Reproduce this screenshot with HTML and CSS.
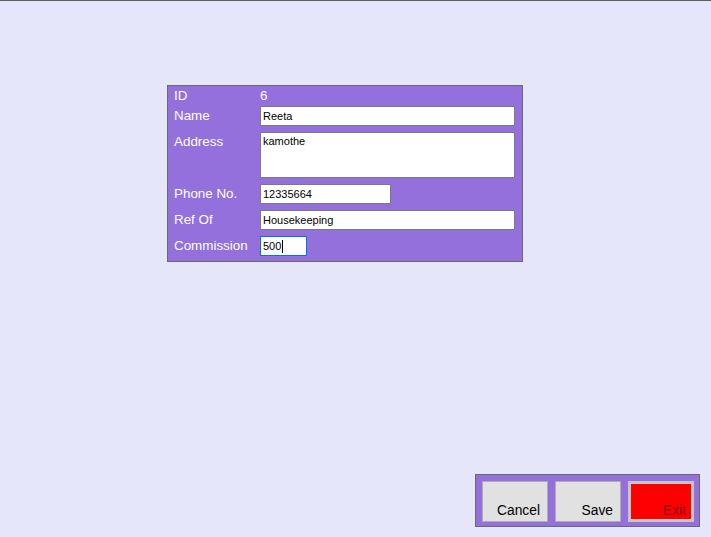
FILE: index.html
```html
<!DOCTYPE html>
<html>
<head>
<meta charset="utf-8">
<link rel="stylesheet" href="styles.css">
</head>
<body>
<div class="window">
  <div class="form-panel">
    <div class="label">ID</div>
    <div class="value">6</div>
    <div class="label">Name</div>
    <div class="field wide">Reeta</div>
    <div class="label">Address</div>
    <div class="field wide area">kamothe</div>
    <div class="label">Phone No.</div>
    <div class="field phone">12335664</div>
    <div class="label">Ref Of</div>
    <div class="field wide">Housekeeping</div>
    <div class="label">Commission</div>
    <div class="field small focused">500<span class="caret"></span></div>
  </div>
  <div class="button-bar">
    <div class="btn">Cancel</div>
    <div class="btn">Save</div>
    <div class="btn exit">Exit</div>
  </div>
</div>
</body>
</html>
```
FILE: styles.css
```css
html, body {
  margin: 0;
  padding: 0;
}
body {
  background: #e6e6fa;
  font-family: "Liberation Sans", Arial, sans-serif;
  border-top: 1px solid #5f5f5f;
}
.window {
  height: 536px;
  display: flex;
  flex-direction: column;
  align-items: flex-start;
}
.form-panel {
  margin-left: 167px;
  margin-top: 84px;
  border: 1px solid #6a6a6a;
  background: #9370db;
  display: grid;
  grid-template-columns: 86px 255px;
  grid-template-rows: 14px 20px 46px 20px 20px 20px;
  row-gap: 6px;
  padding: 0 7px 5px 6px;
  box-sizing: content-box;
  width: 341px;
}
.label, .value {
  color: #ffffff;
  font-size: 13.4px;
  line-height: 15px;
  padding-top: 2px;
  white-space: nowrap;
}
.field {
  background: #ffffff;
  border: 1px solid #7a7a7a;
  box-sizing: border-box;
  height: 20px;
  font-size: 11px;
  line-height: 18px;
  padding-left: 2px;
  color: #000;
  display: flex;
  align-items: center;
}
.field.area {
  height: 46px;
  align-items: flex-start;
  padding-top: 2px;
  line-height: 13px;
}
.field.wide { width: 255px; }
.field.phone { width: 131px; }
.field.small { width: 47px; }
.field.focused { border-color: #0078d7; }
.caret {
  display: inline-block;
  width: 1px;
  height: 13px;
  background: #000;
  margin-left: 1px;
}
.button-bar {
  margin-top: auto;
  margin-bottom: 10px;
  align-self: flex-end;
  margin-right: 11px;
  border: 1px solid #6a6a6a;
  background: #9370db;
  display: flex;
  gap: 7px;
  padding: 6px 5px 4px 6px;
}
.btn {
  width: 66px;
  height: 41px;
  box-sizing: border-box;
  background: #e1e1e1;
  border: 1px solid #adadad;
  font-size: 13.8px;
  line-height: 15px;
  color: #000;
  display: flex;
  align-items: flex-end;
  justify-content: flex-end;
  padding: 0 7px 3px 0;
}
.btn.exit {
  background: #ff0000;
  border: 3px solid #c6c6c6;
  color: #850000;
  padding: 0 5px 1px 0;
}
```
